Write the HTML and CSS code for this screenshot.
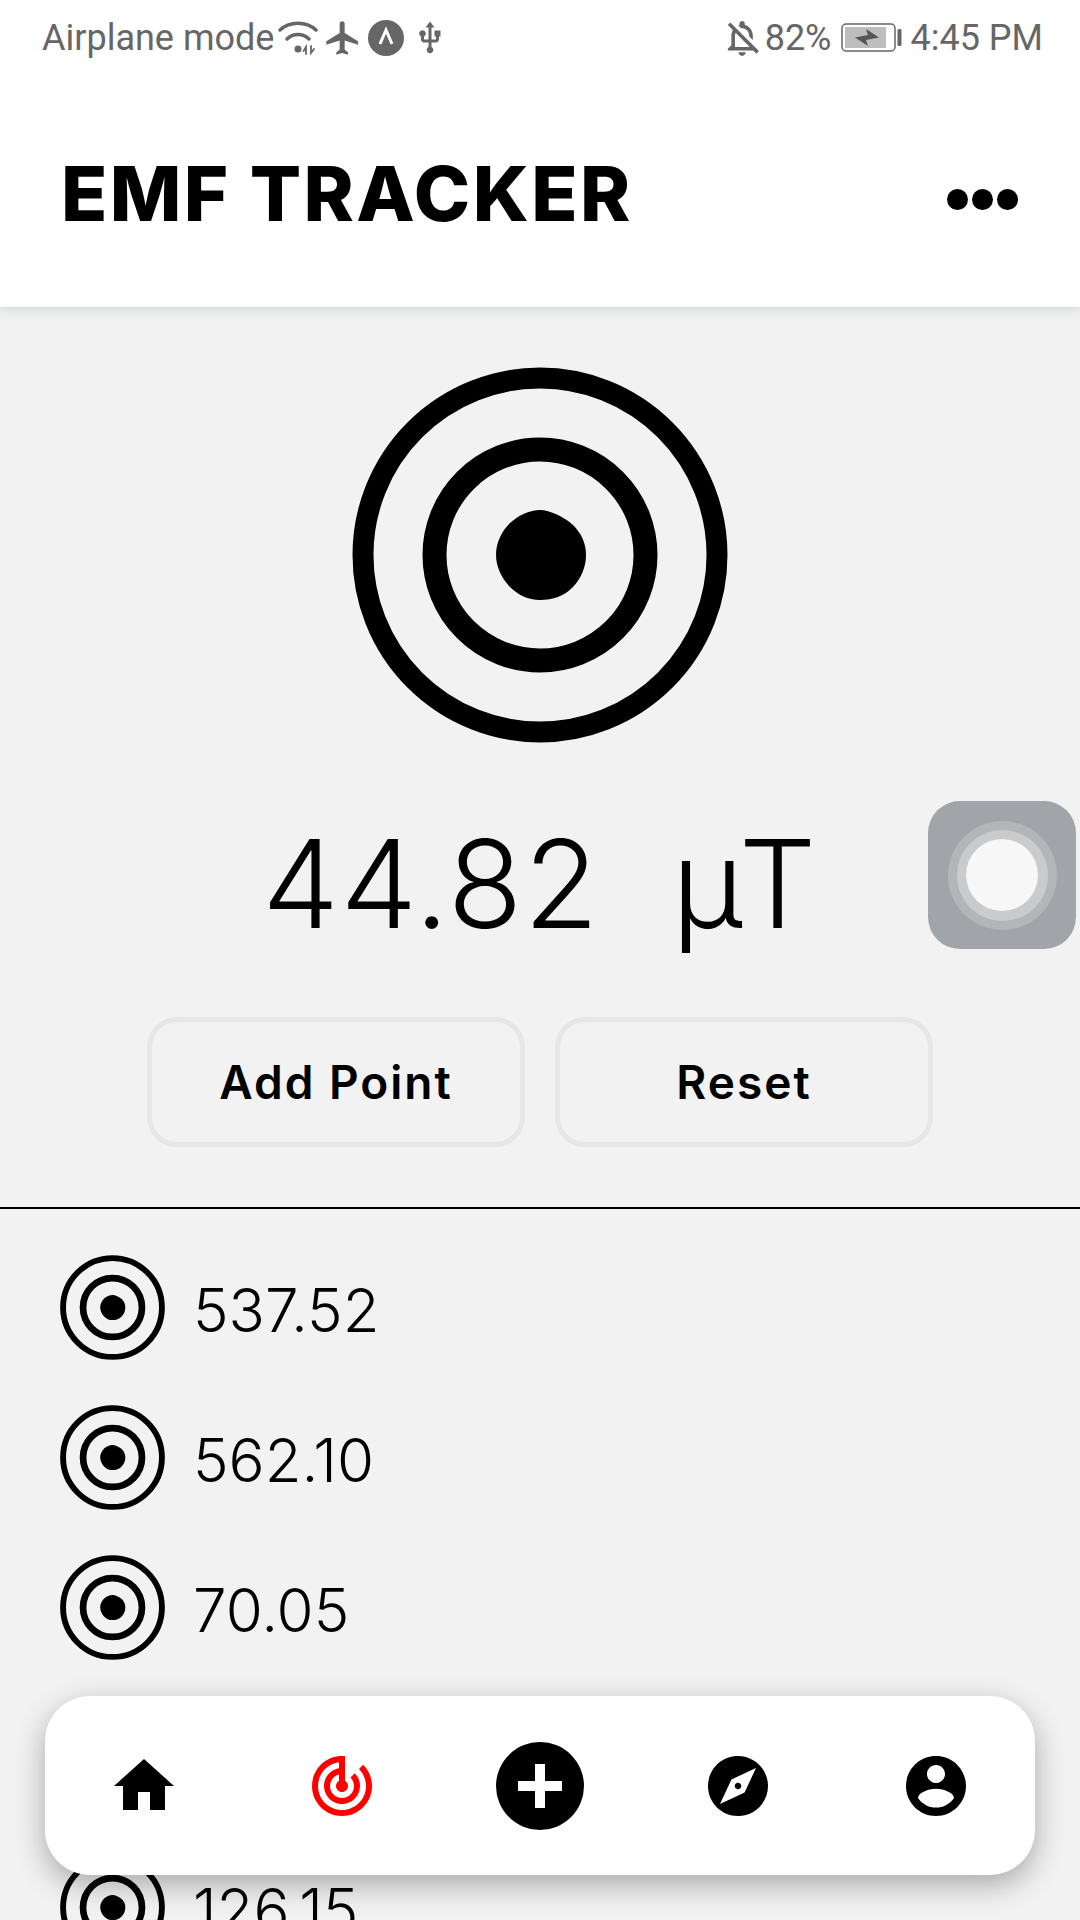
FILE: index.html
```html
<!DOCTYPE html>
<html lang="en">
<head>
  <meta charset="UTF-8" />
  <meta name="viewport" content="width=device-width, initial-scale=1.0"/>
  <title>EMF Tracker</title>
  <link rel="stylesheet" href="styles.css">
</head>
<body>
  <svg class="defs" width="0" height="0">
    <symbol id="target" viewBox="0 0 376 376">
      <circle cx="188" cy="188" r="177" fill="none" stroke="#000" stroke-width="21"/>
      <circle cx="188" cy="188" r="105.500" fill="none" stroke="#000" stroke-width="24"/>
      <path d="M188 143C198 143 212 150 221 158C229 166 234 176 234 188C234 200 229 212 220 221C212 229 201 233 188 233C176 233 166 228 157 219C149 210 144 199 144 188C144 176 149 165 158 156C167 148 178 143 188 143z"/>
    </symbol>
  </svg>

  <header class="header">
    <div class="statusbar">
      <div class="status-left">
        <span class="status-text">Airplane mode</span>
        <svg class="wifi" viewBox="0 0 40 34" fill="none" stroke="#666" stroke-linecap="round">
          <path d="M2 9C12 0 28 0 38 9" stroke-width="3.500"/>
          <path d="M9 18C15 12 25 12 31 18" stroke-width="3.500"/>
          <circle cx="20" cy="28" r="3.500" fill="#666" stroke="none"/>
          <path d="M28 33V26l-2.500 4M33 25v7l3-4" stroke-width="1.800"/>
        </svg>
        <svg class="icon-36" viewBox="0 0 24 24" fill="#666"><path d="M21 16v-2l-8-5V3.500c0-.83-.67-1.500-1.500-1.500S10 2.670 10 3.500V9l-8 5v2l8-2.500V19l-2 1.500V22l3.500-1 3.500 1v-1.500L13 19v-5.500l8 2.500z"/></svg>
        <svg class="expo" viewBox="0 0 36 36"><circle cx="18" cy="18" r="18" fill="#666"/><path d="M12 24l6-14 6 14" fill="none" stroke="#fff" stroke-width="3"/></svg>
        <svg class="usb" viewBox="4 0 16 24" fill="#666"><path d="M15 7v4h1v2h-3V5h2l-3-4-3 4h2v8H8v-2.070c.7-.37 1.200-1.080 1.200-1.930 0-1.210-.99-2.200-2.200-2.200-1.210 0-2.200.99-2.200 2.200 0 .85.5 1.560 1.200 1.930V13c0 1.110.89 2 2 2h3v3.050c-.71.37-1.200 1.100-1.200 1.950 0 1.220.99 2.200 2.200 2.200 1.210 0 2.200-.98 2.200-2.200 0-.85-.49-1.580-1.200-1.950V15h3c1.110 0 2-.89 2-2v-2h1V7h-4z"/></svg>
      </div>
      <div class="status-right">
        <svg class="bell" viewBox="3 2 19 20" fill="#666"><path d="M12 22c1.100 0 2-.9 2-2h-4c0 1.100.9 2 2 2zm0-15.500c2.490 0 4 2.020 4 4.500v.1l2 2V11c0-3.070-1.630-5.640-4.500-6.320V4c0-.83-.67-1.500-1.500-1.500s-1.500.67-1.500 1.500v.68c-.24.06-.47.15-.69.23l1.640 1.640c.18-.02.36-.05.55-.05zM5.410 3.350L4 4.760l2.810 2.810C6.290 8.570 6 9.740 6 11v5l-2 2v1h14.240l1.740 1.740 1.410-1.410L5.410 3.350zM16 17H8v-6c0-.68.12-1.320.34-1.900L16 16.760V17z"/></svg>
        <span class="status-text pct">82%</span>
        <svg class="battery" viewBox="0 0 61 30">
          <rect x="1" y="1" width="53" height="27" rx="4" fill="none" stroke="#666" stroke-width="1.500"/>
          <rect x="4" y="4" width="41" height="21" fill="#bdbdbd"/>
          <rect x="56.500" y="6" width="4" height="17" rx="1.500" fill="#666"/>
          <path d="M14 14.500l13-2.500-2-6 13 8.500-13 2.500 2 6z" fill="#555"/>
        </svg>
        <span class="status-text">4:45 PM</span>
      </div>
    </div>
    <div class="titlebar">
      <h1 class="title">EMF TRACKER</h1>
      <div class="dots"><span></span><span></span><span></span></div>
    </div>
  </header>

  <main class="main">
    <section class="meter">
      <svg class="target-big"><use href="#target"/></svg>
      <div class="value">44.82&nbsp;&nbsp;µT</div>
      <div class="actions">
        <button class="btn" type="button">Add Point</button>
        <button class="btn" type="button">Reset</button>
      </div>
    </section>

    <ul class="points">
      <li class="point"><svg class="target-small"><use href="#target"/></svg><span>537.52</span></li>
      <li class="point"><svg class="target-small"><use href="#target"/></svg><span>562.10</span></li>
      <li class="point"><svg class="target-small"><use href="#target"/></svg><span>70.05</span></li>
      <li class="point"><svg class="target-small"><use href="#target"/></svg></li>
      <li class="point"><svg class="target-small"><use href="#target"/></svg><span>126.15</span></li>
    </ul>
  </main>

  <div class="assist"><div class="assist-ring"><div class="assist-ring2"><div class="assist-dot"></div></div></div></div>

  <nav class="tabbar">
    <div class="tab"><svg class="tab-icon" viewBox="0 0 24 24"><path d="M10 20v-6h4v6h5v-8h3L12 3 2 12h3v8z"/></svg></div>
    <div class="tab"><svg class="tab-icon" viewBox="0 0 24 24" fill="#f00"><path d="M19.070 4.930l-1.410 1.410C19.100 7.790 20 9.790 20 12c0 4.420-3.580 8-8 8s-8-3.580-8-8c0-4.080 3.050-7.440 7-7.930v2.020C8.160 6.570 6 9.030 6 12c0 3.310 2.690 6 6 6s6-2.690 6-6c0-1.660-.67-3.160-1.760-4.240l-1.410 1.410C15.550 9.900 16 10.900 16 12c0 2.210-1.790 4-4 4s-4-1.790-4-4c0-1.860 1.280-3.410 3-3.860v2.140c-.6.35-1 .98-1 1.720 0 1.100.9 2 2 2s2-.9 2-2c0-.74-.4-1.380-1-1.720V2h-1C6.480 2 2 6.480 2 12s4.480 10 10 10 10-4.480 10-10c0-2.760-1.120-5.260-2.930-7.070z"/></svg></div>
    <div class="tab"><div class="add"></div></div>
    <div class="tab"><svg class="tab-icon" viewBox="0 0 24 24"><path d="M12 10.900c-.61 0-1.100.49-1.100 1.100s.49 1.100 1.100 1.100c.61 0 1.100-.49 1.100-1.100s-.49-1.100-1.100-1.100zM12 2C6.480 2 2 6.480 2 12s4.480 10 10 10 10-4.480 10-10S17.520 2 12 2zm2.190 12.190L6 18l3.810-8.190L18 6l-3.810 8.190z"/></svg></div>
    <div class="tab"><svg class="tab-icon" viewBox="0 0 24 24"><path d="M12 2C6.480 2 2 6.480 2 12s4.480 10 10 10 10-4.480 10-10S17.520 2 12 2zm0 3c1.660 0 3 1.340 3 3s-1.340 3-3 3-3-1.340-3-3 1.340-3 3-3zm0 14.200c-2.500 0-4.710-1.280-6-3.220.03-1.990 4-3.080 6-3.080 1.990 0 5.970 1.090 6 3.080-1.290 1.940-3.500 3.220-6 3.220z"/></svg></div>
  </nav>
</body>
</html>
```

FILE: styles.css
```css
* {
  box-sizing: border-box;
}
html,
body {
  margin: 0;
  height: 1920px;
  overflow: hidden;
}
body {
  position: relative;
  font-family: Inter, "Liberation Sans", sans-serif;
  color: #000;
  background: #f2f2f2;
}
.defs {
  position: absolute;
}

/* status bar + title */
.header {
  position: relative;
  height: 307px;
  background: #fff;
  box-shadow: 0 2px 12px rgba(90, 110, 130, 0.22);
}
.statusbar {
  display: flex;
  justify-content: space-between;
  align-items: center;
  height: 76px;
  padding: 0 37px 0 42px;
}
.status-left,
.status-right {
  display: flex;
  align-items: center;
}
.status-text {
  font-family: Roboto, sans-serif;
  font-size: 36px;
  color: #666;
}
.wifi {
  width: 40px;
  height: 34px;
  margin-left: 4px;
}
.icon-36 {
  width: 40px;
  height: 40px;
  margin-left: 5px;
}
.expo {
  width: 36px;
  height: 36px;
  margin-left: 5px;
}
.usb {
  width: 24px;
  height: 36px;
  margin-left: 14px;
}
.bell {
  width: 34px;
  height: 36px;
}
.pct {
  margin-left: 5px;
}
.battery {
  width: 61px;
  height: 30px;
  margin: 0 9px;
}
.titlebar {
  display: flex;
  justify-content: space-between;
  align-items: center;
  height: 231px;
  padding: 0 62px 0 61px;
}
.title {
  margin: 0;
  padding-top: 3px;
  font-size: 76px;
  font-weight: 800;
  line-height: 1;
  letter-spacing: 2.400px;
}
.dots {
  display: flex;
  gap: 4px;
  margin-top: 16px;
}
.dots span {
  width: 21px;
  height: 21px;
  border-radius: 50%;
  background: #000;
}

/* meter */
.meter {
  display: flex;
  flex-direction: column;
  align-items: center;
  padding-top: 60px;
  border-bottom: 2px solid #000;
}
.target-big {
  width: 376px;
  height: 376px;
}
.value {
  margin-top: 71px;
  font-size: 122px;
  font-weight: 300;
  line-height: 140px;
  letter-spacing: 1.500px;
}
.actions {
  display: flex;
  gap: 30px;
  margin-top: 63px;
  margin-bottom: 60px;
}
.btn {
  width: 378px;
  height: 130px;
  font-family: inherit;
  font-size: 46px;
  font-weight: 600;
  letter-spacing: 2px;
  color: #000;
  background: transparent;
  border: 5px solid #e6e6e6;
  border-radius: 30px;
}

/* saved points */
.points {
  display: flex;
  flex-direction: column;
  gap: 45px;
  margin: 0;
  padding: 46px 0 0 60px;
  list-style: none;
}
.point {
  display: flex;
  align-items: center;
  gap: 28px;
  height: 105px;
  font-size: 60px;
  font-weight: 300;
}
.point span {
  padding-top: 4px;
}
.target-small {
  width: 105px;
  height: 105px;
}

/* floating assistive button */
.assist {
  position: absolute;
  left: 928px;
  top: 801px;
  display: flex;
  align-items: center;
  justify-content: center;
  width: 148px;
  height: 148px;
  border-radius: 32px;
  background: #a1a4a8;
}
.assist-ring {
  display: flex;
  align-items: center;
  justify-content: center;
  width: 109px;
  height: 109px;
  border-radius: 50%;
  background: #b3b6b9;
}
.assist-ring2 {
  display: flex;
  align-items: center;
  justify-content: center;
  width: 91px;
  height: 91px;
  border-radius: 50%;
  background: #c9cbcd;
}
.assist-dot {
  width: 72px;
  height: 72px;
  border-radius: 50%;
  background: #f7f7f7;
}

/* bottom tabs */
.tabbar {
  position: absolute;
  left: 45px;
  top: 1696px;
  display: flex;
  width: 990px;
  height: 179px;
  border-radius: 45px;
  background: #fff;
  box-shadow: 0 10px 30px rgba(0, 0, 0, 0.3);
}
.tab {
  display: flex;
  flex: 1;
  align-items: center;
  justify-content: center;
}
.tab-icon {
  width: 72px;
  height: 72px;
}
.add {
  position: relative;
  width: 88px;
  height: 88px;
  border-radius: 50%;
  background: #000;
}
.add::before,
.add::after {
  content: "";
  position: absolute;
  background: #fff;
}
.add::before {
  left: 39px;
  top: 22px;
  width: 10px;
  height: 44px;
}
.add::after {
  left: 22px;
  top: 39px;
  width: 44px;
  height: 10px;
}
```
